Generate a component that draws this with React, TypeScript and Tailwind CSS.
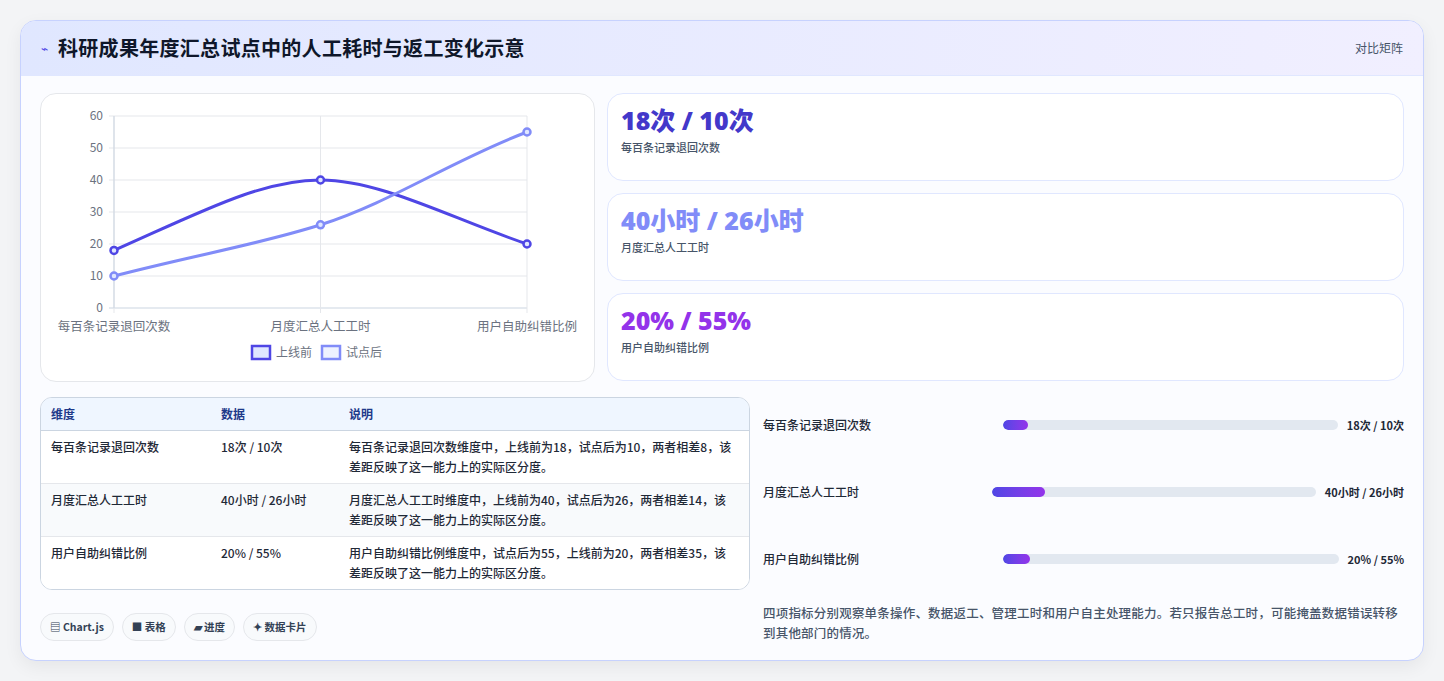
import React from "react";

const font = { fontFamily: '"Noto Sans CJK SC", "Noto Sans", sans-serif' };

function Chart() {
  const X = [113, 319.5, 526];
  const y = (v: number) => 307 - v * 3.2;
  const grid = [0, 10, 20, 30, 40, 50, 60];
  const dark = `M113 ${y(18)} C 200 ${y(30)}, 260 ${y(40)}, 319.5 ${y(40)} C 380 ${y(40)}, 450 ${y(28)}, 526 ${y(20)}`;
  const light = `M113 ${y(10)} C 200 ${y(17)}, 260 ${y(20)}, 319.5 ${y(26)} C 390 ${y(33)}, 450 ${y(46)}, 526 ${y(55)}`;
  return (
    <svg width="554" height="288" viewBox="40 93 554 288" className="block">
      {grid.map((g) => (
        <g key={g}>
          <line x1={108} x2={526} y1={y(g)} y2={y(g)} stroke={g === 0 ? "#cbd5e1" : "#e5e7eb"} strokeWidth="1" />
          <text x={102} y={y(g) + 4} textAnchor="end" fontSize="12" fill="#6b7280" style={font}>{g}</text>
        </g>
      ))}
      {X.map((x) => (
        <line key={x} x1={x} x2={x} y1={115} y2={312} stroke="#e5e7eb" />
      ))}
      <line x1={113} x2={113} y1={115} y2={307} stroke="#cbd5e1" />
      <path d={dark} fill="none" stroke="#4f46e5" strokeWidth="3" />
      <path d={light} fill="none" stroke="#818cf8" strokeWidth="3" />
      {[18, 40, 20].map((v, i) => (
        <circle key={i} cx={X[i]} cy={y(v)} r="3.5" fill="#e0e7ff" stroke="#4f46e5" strokeWidth="2.5" />
      ))}
      {[10, 26, 55].map((v, i) => (
        <circle key={i} cx={X[i]} cy={y(v)} r="3.5" fill="#e0e7ff" stroke="#818cf8" strokeWidth="2.5" />
      ))}
      {["每百条记录退回次数", "月度汇总人工工时", "用户自助纠错比例"].map((t, i) => (
        <text key={t} x={X[i]} y={330} textAnchor="middle" fontSize="12.5" fill="#6b7280" style={font}>{t}</text>
      ))}
      <rect x={251} y={345} width={18} height={13} fill="#e0e7ff" stroke="#4f46e5" strokeWidth="2.5" />
      <text x={275} y={356} fontSize="12" fill="#6b7280" style={font}>上线前</text>
      <rect x={321} y={345} width={18} height={13} fill="#eef2ff" stroke="#818cf8" strokeWidth="2.5" />
      <text x={345} y={356} fontSize="12" fill="#6b7280" style={font}>试点后</text>
    </svg>
  );
}

const kpis = [
  { v: "18次 / 10次", l: "每百条记录退回次数", c: "text-[#4338ca]" },
  { v: "40小时 / 26小时", l: "月度汇总人工工时", c: "text-[#818cf8]" },
  { v: "20% / 55%", l: "用户自助纠错比例", c: "text-[#9333ea]" },
];

const rows = [
  ["每百条记录退回次数", "18次 / 10次", "每百条记录退回次数维度中，上线前为18，试点后为10，两者相差8，该差距反映了这一能力上的实际区分度。"],
  ["月度汇总人工工时", "40小时 / 26小时", "月度汇总人工工时维度中，上线前为40，试点后为26，两者相差14，该差距反映了这一能力上的实际区分度。"],
  ["用户自助纠错比例", "20% / 55%", "用户自助纠错比例维度中，试点后为55，上线前为20，两者相差35，该差距反映了这一能力上的实际区分度。"],
];

const bars = [
  { l: "每百条记录退回次数", v: "18次 / 10次", lw: "w-[240px]", f: 25 },
  { l: "月度汇总人工工时", v: "40小时 / 26小时", lw: "w-[229px]", f: 53 },
  { l: "用户自助纠错比例", v: "20% / 55%", lw: "w-[240px]", f: 27 },
];

export default function App() {
  return (
    <div className="min-h-[681px] bg-[#f3f4f6] pt-5 px-5" style={font}>
      <div className="w-[1404px] h-[641px] rounded-2xl border border-[#c7d2fe] bg-[#fbfcff] overflow-hidden shadow-[0_6px_18px_rgba(0,0,0,0.06)]">
        <div className="h-[55px] flex items-center justify-between px-5 bg-gradient-to-r from-[#e0e7ff] to-[#f1efff] border-b border-[#e0e7ff]">
          <div className="flex items-center gap-2.5">
            <span className="text-[#4f46e5] text-[12px]">⌁</span>
            <span className="text-[20px] font-bold text-[#0f172a] tracking-[0.3px]">科研成果年度汇总试点中的人工耗时与返工变化示意</span>
          </div>
          <span className="text-[12px] text-[#475569]">对比矩阵</span>
        </div>
        <div className="px-[19px] pt-[17px]">
          <div className="flex gap-3">
            <div className="w-[555px] h-[289px] rounded-2xl border border-[#e5e7eb] bg-white overflow-hidden">
              <Chart />
            </div>
            <div className="flex-1 flex flex-col gap-3">
              {kpis.map((k) => (
                <div key={k.l} className="h-[88px] rounded-2xl border border-[#e0e7ff] bg-white px-[13px] pt-[9px]">
                  <div className={`text-[25px] font-extrabold leading-[34px] ${k.c}`} style={{ fontFamily: '"Open Sans", "Noto Sans CJK SC", sans-serif' }}>{k.v}</div>
                  <div className="text-[11px] font-medium text-[#475569] mt-0.5">{k.l}</div>
                </div>
              ))}
            </div>
          </div>
          <div className="flex gap-[13px] mt-[15px]">
            <div className="w-[710px] shrink-0">
              <div className="rounded-xl border border-[#cbd5e1] overflow-hidden bg-white">
                <div className="grid grid-cols-[170px_128px_1fr] h-[33px] items-center px-[10px] bg-[#eff6ff] border-b border-[#cbd5e1] text-[12px] font-semibold text-[#1e3a8a]">
                  <div>维度</div><div>数据</div><div>说明</div>
                </div>
                {rows.map((r, i) => (
                  <div key={i} className={`grid grid-cols-[170px_128px_1fr] px-[10px] py-[6px] text-[12px] font-medium text-[#1f2937] leading-[20px] ${i === 1 ? "bg-[#f8fafc]" : "bg-white"} ${i < 2 ? "border-b border-[#e5e7eb]" : ""}`}>
                    <div>{r[0]}</div><div>{r[1]}</div><div className="pr-1">{r[2]}</div>
                  </div>
                ))}
              </div>
              <div className="flex gap-2 mt-[23px]">
                {["▤ Chart.js", "■ 表格", "▰ 进度", "✦ 数据卡片"].map((t) => (
                  <span key={t} className="h-[28px] px-[9px] flex items-center rounded-full border border-[#e5e7eb] bg-[#f8fafc] text-[10.5px] font-semibold text-[#334155]">{t}</span>
                ))}
              </div>
            </div>
            <div className="flex-1 pt-[17px]">
              {bars.map((b) => (
                <div key={b.l} className="flex items-center h-[22px] mb-[45px]">
                  <div className={`${b.lw} shrink-0 text-[12px] font-medium text-[#1f2937]`}>{b.l}</div>
                  <div className="flex-1 h-[10px] rounded-full bg-[#e2e8f0] overflow-hidden">
                    <div className="h-full rounded-full bg-gradient-to-r from-[#4f46e5] to-[#9333ea]" style={{ width: b.f }} />
                  </div>
                  <div className="ml-[9px] text-[11px] font-bold text-[#1f2937]">{b.v}</div>
                </div>
              ))}
              <p className="-mt-[12px] text-[12.5px] font-medium leading-[20px] text-[#475569] tracking-[0.2px]">四项指标分别观察单条操作、数据返工、管理工时和用户自主处理能力。若只报告总工时，可能掩盖数据错误转移到其他部门的情况。</p>
            </div>
          </div>
        </div>
      </div>
    </div>
  );
}
